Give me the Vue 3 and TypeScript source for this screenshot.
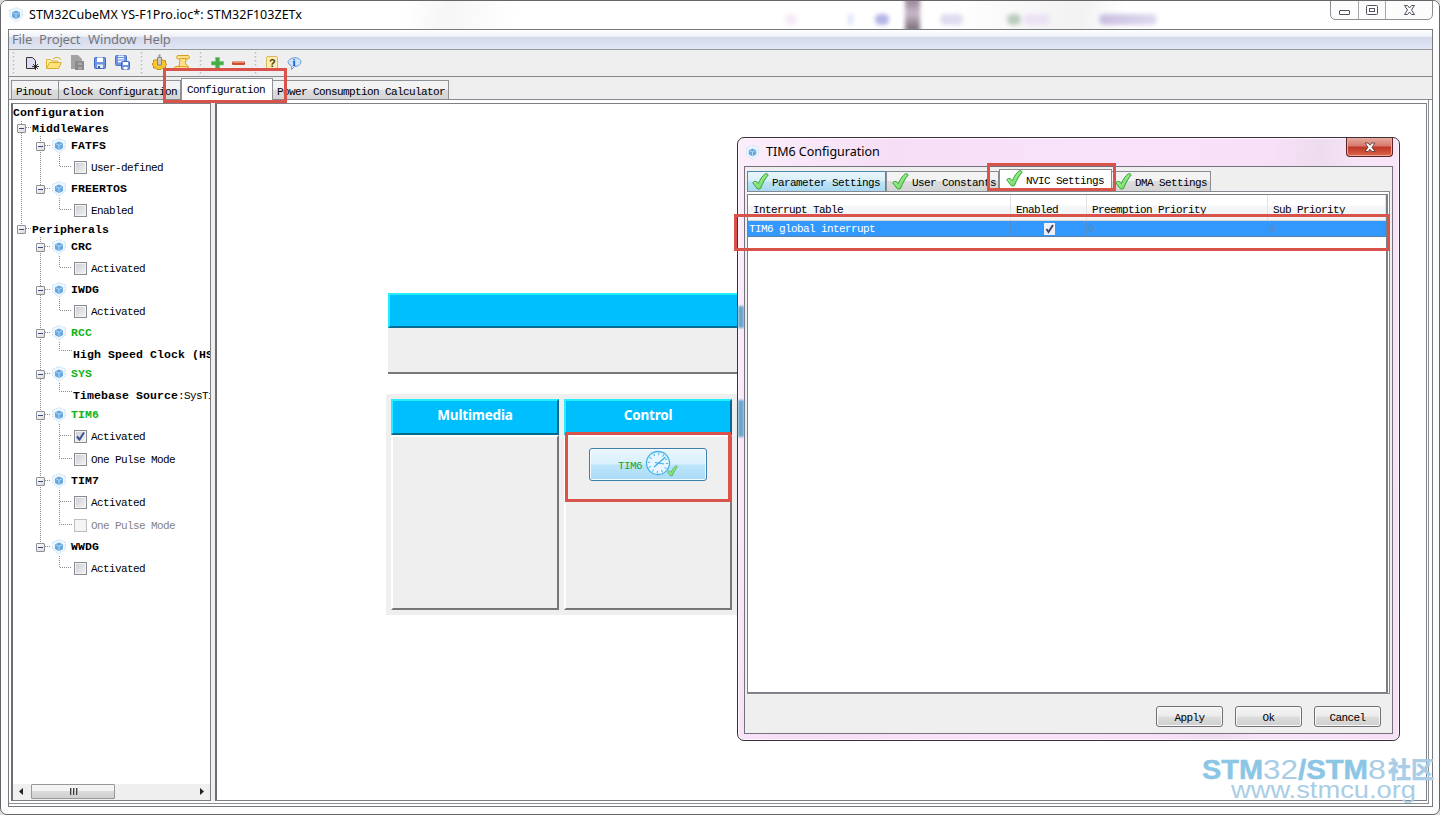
<script setup lang="ts">
import { computed } from 'vue'

type Kind = 'root' | 'group' | 'node' | 'check' | 'param'
interface Row {
  kind: Kind
  label: string
  value?: string
  on?: boolean
  green?: boolean
  disabled?: boolean
}

const rows: Row[] = [
  { kind: 'root', label: 'Configuration' },
  { kind: 'group', label: 'MiddleWares' },
  { kind: 'node', label: 'FATFS' },
  { kind: 'check', label: 'User-defined' },
  { kind: 'node', label: 'FREERTOS' },
  { kind: 'check', label: 'Enabled' },
  { kind: 'group', label: 'Peripherals' },
  { kind: 'node', label: 'CRC' },
  { kind: 'check', label: 'Activated' },
  { kind: 'node', label: 'IWDG' },
  { kind: 'check', label: 'Activated' },
  { kind: 'node', label: 'RCC', green: true },
  { kind: 'param', label: 'High Speed Clock (HSE)' },
  { kind: 'node', label: 'SYS', green: true },
  { kind: 'param', label: 'Timebase Source', value: ':SysTick' },
  { kind: 'node', label: 'TIM6', green: true },
  { kind: 'check', label: 'Activated', on: true },
  { kind: 'check', label: 'One Pulse Mode' },
  { kind: 'node', label: 'TIM7' },
  { kind: 'check', label: 'Activated' },
  { kind: 'check', label: 'One Pulse Mode', disabled: true },
  { kind: 'node', label: 'WWDG' },
  { kind: 'check', label: 'Activated' },
]

const heights: Record<Kind, number> = { root: 17, group: 15, node: 20, check: 23, param: 21 }

// Dotted connectors, walked from the row heights
const connectors = computed(() => {
  let y = 0
  let nodeBottom = 0
  let groupBottom = 0
  let lastNode = 0
  let d = ''
  let lastGroup = 0
  rows.forEach((r) => {
    const mid = Math.floor(y + heights[r.kind] / 2) - 0.5
    if (r.kind === 'group') {
      if (lastNode) d += `M27.5 ${groupBottom}V${lastNode}`
      d += `M9 ${mid}H18`
      groupBottom = y + 15
      lastGroup = mid
    } else if (r.kind === 'node') {
      d += `M28 ${mid}H38`
      lastNode = mid
      nodeBottom = y + 19
    } else if (r.kind !== 'root') {
      const at = r.kind === 'param' ? mid - 2 : mid
      d += `M46.5 ${nodeBottom}V${at}H59`
    }
    y += heights[r.kind]
  })
  d += `M27.5 ${groupBottom}V${lastNode}M8.5 17V${lastGroup}`
  return d
})

const dialogTabs = [
  { label: 'Parameter Settings', cls: 'param' },
  { label: 'User Constants', cls: 'user' },
  { label: 'NVIC Settings', cls: 'nvic' },
  { label: 'DMA Settings', cls: 'dma' },
]
const columns = ['Interrupt Table', 'Enabled', 'Preemption Priority', 'Sub Priority']
const menus = ['File', 'Project', 'Window', 'Help']
const actions = ['Apply', 'Ok', 'Cancel']
</script>

<template>
  <svg width="0" height="0" class="defs">
    <defs>
      <linearGradient id="tick" x1="0" y1="0" x2="1" y2="1">
        <stop offset="0" stop-color="#b9f5a0" /><stop offset="1" stop-color="#5fd85a" />
      </linearGradient>
      <symbol id="cube" viewBox="0 0 16 16">
        <path d="M8 .7 14.3 3v7L8 15.3 1.700 10V3z" fill="#f0f8fe" stroke="#c4e2f6" stroke-width="1" stroke-dasharray="2 .7" />
        <path d="M8 3.600 12 5.300v4.600L8 12.200 4 9.900V5.300z" fill="#69a8de" />
        <path d="M4.500 5.700 8 7.300l3.500-1.600M8 7.300V12" fill="none" stroke="#b8dcf6" stroke-width=".9" />
      </symbol>
      <symbol id="check" viewBox="0 0 16 16">
        <path d="M.7 9.200Q2.500 7.300 3.800 8L6 10C7.500 6 10 2.500 12.500.7Q14.500.3 15.300 1.800C12.500 5 10 9.500 8 14.500Q6.500 15.700 5 14.800z" fill="url(#tick)" stroke="#2f9e37" stroke-width=".9" stroke-linejoin="round" />
      </symbol>
    </defs>
  </svg>
  <div class="window">
    <header class="titlebar">
      <svg class="app-icon"><use href="#cube" /></svg>
      <span class="title">STM32CubeMX YS-F1Pro.ioc*: STM32F103ZETx</span>
      <div class="smudges">
        <i class="s1" /><i class="s2" /><i class="s3" /><i class="s4" /><i class="s5" /><i class="s6" /><i class="s7" /><i class="s8" />
      </div>
      <div class="controls">
        <svg width="104" height="19" viewBox="0 0 104 19">
          <path d="M.5 0V13Q.5 18.500 6 18.500H97Q102.500 18.500 102.500 13V0" fill="#fcfcfc" stroke="#8e8e92" />
          <path d="M28.500 0V18M55.500 0V18" stroke="#a5a5a9" />
          <rect x="9.500" y="9.500" width="10" height="4" rx=".5" fill="#fff" stroke="#505260" />
          <rect x="36.500" y="4.500" width="11" height="9" rx="1" fill="#fff" stroke="#505260" />
          <rect x="39.500" y="7.500" width="5" height="3" fill="#fff" stroke="#505260" />
          <path d="M74.500 4.500h3l2 2.500 2-2.500h3L81.500 9l3 4.500h-3l-2-2.500-2 2.500h-3l3-4.500z" fill="#fff" stroke="#505260" />
        </svg>
      </div>
    </header>

    <main class="client">
      <nav class="menubar">
        <span v-for="m in menus" :key="m" :class="'menu-' + m.toLowerCase()">{{ m }}</span>
      </nav>
      <div class="toolbar">
        <svg width="310" height="26" viewBox="9 50 310 26">
          <g stroke="#b9b9b9" stroke-width="1.500" stroke-dasharray="1.500 2.500">
            <path d="M13.500 52V74M141.500 52V74M200.500 52V74M255.500 52V74" />
          </g>
          <path d="M26.500 57.500h6l3 3v8h-9z" fill="#dedcf5" stroke="#333" />
          <path d="M35.500 63v7M32 66.500h7M33 64l5 5M38 64l-5 5" stroke="#222" stroke-width=".9" />
          <path d="M46.500 68V59.500h4l1 1.500h6v2" fill="#fff1a8" stroke="#dfb436" />
          <path d="M46.500 68.500 49.500 62.500h12l-3 6z" fill="#ffe37a" stroke="#dcae2c" />
          <path d="M53 59Q57 55.500 61 59.500" fill="none" stroke="#d9b032" />
          <path d="M71 55h7l4 4v10H71z" fill="#a3a3a3" />
          <path d="M75 61h9v9h-9z" fill="#8a8a8a" /><path d="M78 62.500h4v2.500h-4zM78 67h4v2.500h-4z" fill="#a8a8a8" />
          <rect x="94.500" y="57.500" width="11" height="11" rx="1" fill="#6f93e2" stroke="#4268be" />
          <path d="M97 57.500h6v4.500h-6z" fill="#fff" /><path d="M97 64.500h6v3.500h-6z" fill="#e6eefc" /><path d="M98 66h2v2h-2z" fill="#3458a6" />
          <rect x="115.500" y="55.500" width="11" height="10" rx="1" fill="#6f93e2" stroke="#4f74c6" />
          <path d="M118 55.500h6v7h-6z" fill="#eef4ff" /><path d="M118 57.500h6M118 60h6" stroke="#6f93d8" />
          <rect x="121.500" y="61.500" width="8" height="8" rx="1" fill="#6f93e2" stroke="#4268be" /><path d="M123 62h5v3h-5zM123.500 67h4v2.500h-4z" fill="#fff" />
          <path d="M152 64l1.500-1.500V60h3l1-1h4l1.500 1.500h2.500V63l1 1-1 2v2h-3l-1.500 1.500h-4L156 68h-2.500v-2z" fill="#f8c62f" stroke="#c78e15" />
          <path d="M157.500 57.500v7.500h4v-7.500z" fill="#c9c9c9" stroke="#858585" /><path d="M159.500 54.500v3" stroke="#999" stroke-width="2" />
          <path d="M177.500 55.500h11l1 2-1 1.500h-2.500l-.5 4.500 3 3.500v2.500H175l-.5-2.500 1-.5h3.500l1-6-.5-1.500h-2l-1-1.500z" fill="#ffe089" stroke="#d79c20" />
          <path d="M180 58.500h6M178 66.500h8l2 1" fill="none" stroke="#cb9226" stroke-width=".8" />
          <path d="M215.500 57.500h4v4h4v3.500h-4v4h-4v-4h-4v-3.500h4z" fill="#45ac46" stroke="#73c673" stroke-width=".7" />
          <rect x="232" y="61.500" width="13" height="3.500" rx="1" fill="#cc4b2b" /><path d="M233 62.500h11" stroke="#e58b6f" />
          <rect x="266.500" y="56.500" width="11" height="12" rx="1.500" fill="#ffedac" stroke="#d9b960" />
          <text x="269" y="66.500" class="glyph">?</text>
          <path d="M291.500 69.500V66Q287.500 64 288 61.500 290 57.500 295 57.500 301 58.500 301 62 300 66.500 294.500 66.500z" fill="#cfe3fa" stroke="#6f9ed8" />
          <text x="292.500" y="66" class="glyph info">i</text>
        </svg>
      </div>

      <div class="tabs">
        <span class="tab t1">Pinout</span>
        <span class="tab t2">Clock Configuration</span>
        <span class="tab t3 active">Configuration</span>
        <span class="tab t4">Power Consumption Calculator</span>
      </div>

      <div class="workspace">
        <aside class="tree">
          <div class="tree-body">
            <svg class="lines" width="198" height="490">
              <path :d="connectors" fill="none" stroke="#8a8a8a" stroke-dasharray="1 1" />
            </svg>
            <div v-for="(r, i) in rows" :key="i" class="row" :class="[r.kind, { green: r.green, disabled: r.disabled }]">
              <i v-if="r.kind === 'group' || r.kind === 'node'" class="expander" />
              <svg v-if="r.kind === 'node'" class="node-icon"><use href="#cube" /></svg>
              <span v-if="r.kind === 'check'" class="box">
                <svg v-if="r.on" width="11" height="11" viewBox="0 0 11 11"><path d="M2 5.500 4.500 8.500 9 1.500" fill="none" stroke="#3c4f91" stroke-width="2" /></svg>
              </span>
              <span class="label">{{ r.label }}</span><span v-if="r.value" class="value">{{ r.value }}</span>
            </div>
          </div>
          <div class="scrollbar">
            <svg width="198" height="16" viewBox="0 0 198 16">
              <path d="M10 4v7L6 7.500zM187 4v7L191 7.500z" fill="#222" />
            </svg>
            <div class="thumb"><i /><i /><i /></div>
          </div>
        </aside>

        <section class="canvas">
          <div class="middle">
            <div class="middle-head" />
          </div>
          <div class="board">
            <div class="column">
              <h3>Multimedia</h3>
              <div class="cell" />
            </div>
            <div class="column">
              <h3>Control</h3>
              <div class="cell">
                <button class="tim">
                  <span>TIM6</span>
                  <svg width="33" height="28" viewBox="0 0 33 28">
                    <circle cx="13" cy="13" r="11.500" fill="#e8f6ff" stroke="#45b3e7" stroke-width="1.300" />
                    <circle cx="13" cy="13" r="9" fill="none" stroke="#45b3e7" stroke-width="2.500" stroke-dasharray="1 3.712" />
                    <path d="M9 17 20.500 7M10 12.500l9 1.500" stroke="#3dabe2" stroke-width="1.200" fill="none" />
                    <svg x="22" y="15" width="11" height="12"><use href="#check" /></svg>
                  </svg>
                </button>
              </div>
            </div>
          </div>
        </section>
      </div>
    </main>

    <div class="dialog">
      <i class="bleed b1" /><i class="bleed b2" />
      <header class="dlg-title">
        <svg class="dlg-icon"><use href="#cube" /></svg>
        <span>TIM6 Configuration</span>
        <div class="close">
          <svg width="12" height="11" viewBox="0 0 12 11"><path d="M1 1h3l2 2.300L8 1h3L8 5.300l3 4.200H8L6 7.300 4 9.500H1l3-4.200z" fill="#fff" stroke="#5c3a3a" stroke-width=".9" /></svg>
        </div>
      </header>
      <div class="dlg-client">
        <div class="dlg-tabs">
          <span v-for="t in dialogTabs" :key="t.cls" class="dtab" :class="t.cls">
            <svg class="tick"><use href="#check" /></svg>{{ t.label }}
          </span>
        </div>
        <div class="pane">
          <div class="table">
            <div class="thead"><span v-for="c in columns" :key="c">{{ c }}</span></div>
            <div class="trow">
              <span>TIM6 global interrupt</span>
              <span class="mid">
                <svg width="11" height="12" viewBox="0 0 11 12"><rect width="11" height="12" fill="#eef0f4" /><path d="M2.500 6 4.500 9 9 2" fill="none" stroke="#3c4474" stroke-width="1.900" /></svg>
              </span>
              <span class="dim">0</span>
              <span class="dim">0</span>
            </div>
          </div>
        </div>
        <footer class="dlg-foot">
          <button v-for="a in actions" :key="a">{{ a }}</button>
        </footer>
      </div>
    </div>

    <div class="mark m1" />
    <div class="mark m2" />
    <div class="mark m3" />
    <div class="mark m4" />

    <svg class="watermark" width="236" height="52" viewBox="1200 752 236 52">
      <g class="wm">
        <text x="1202" y="779" textLength="61" lengthAdjust="spacingAndGlyphs" class="b">STM</text>
        <text x="1263" y="779" textLength="35" lengthAdjust="spacingAndGlyphs">32</text>
        <text x="1298" y="779" textLength="70" lengthAdjust="spacingAndGlyphs" class="b">/STM</text>
        <text x="1368" y="779" textLength="18" lengthAdjust="spacingAndGlyphs">8</text>
        <text x="1388" y="778" textLength="46" lengthAdjust="spacingAndGlyphs" class="cjk">社区</text>
        <text x="1231" y="798" textLength="185" lengthAdjust="spacingAndGlyphs" class="url">www.stmcu.org</text>
      </g>
    </svg>
  </div>
</template>

<style>
body {
  margin: 0;
  overflow: hidden;
  background: #dcdcdc;
}
</style>

<style scoped>
* {
  box-sizing: border-box;
}
.defs {
  position: absolute;
}
.window {
  position: relative;
  width: 1440px;
  height: 815px;
  border: 1px solid #66666a;
  border-radius: 7px;
  background: #fdfcfd;
  overflow: hidden;
  font: 11px/14px 'Liberation Mono', monospace;
  letter-spacing: -0.6px;
  color: #000;
  white-space: pre;
}
.titlebar {
  position: relative;
  height: 28px;
  display: flex;
  align-items: center;
  padding-left: 7px;
  background: linear-gradient(100deg, #fff 0 28%, #f6f6f6 31%, #fff 36% 66%, #f2f2f2 75%, #fff 78%);
}
.app-icon {
  width: 16px;
  height: 16px;
}
.title {
  margin: -2px 0 0 5px;
  font: 12.500px 'Noto Sans', sans-serif;
  letter-spacing: 0.03px;
}
.controls {
  position: absolute;
  top: 0;
  right: 5px;
  height: 19px;
}
.smudges i {
  position: absolute;
  top: 13px;
  height: 11px;
  width: 12px;
  border-radius: 5px;
  filter: blur(2px);
}
.smudges .s1 { left: 784px; background: #f6eaf6; }
.smudges .s2 { left: 847px; width: 5px; background: #dde3fb; }
.smudges .s3 { left: 874px; width: 14px; background: #b4b5e6; }
.smudges .s4 { left: 904px; top: -3px; width: 15px; height: 34px; background: linear-gradient(#8f7e91, #c9b9c9 45%, #6f6571); border-radius: 0; }
.smudges .s5 { left: 939px; width: 23px; background: #dedcef; }
.smudges .s6 { left: 1006px; width: 14px; background: #bccdbf; }
.smudges .s7 { left: 1022px; width: 27px; background: #ebe3f5; }
.smudges .s8 { left: 1098px; width: 58px; background: linear-gradient(90deg, #c9bfe0, #e0daf0); }

.client {
  position: relative;
  margin: 0 7px;
  width: 1425px;
  height: 778px;
  border: 1px solid #777a7e;
  display: flex;
  flex-direction: column;
  background: #fff;
}
.menubar {
  flex: none;
  height: 20px;
  display: flex;
  border-bottom: 1px solid #97999d;
  background: linear-gradient(#fff, #eef1f8 34%, #d5daeb 36%, #e1e6f5);
  color: #76767a;
  font: 13px/18px 'Noto Sans', sans-serif;
  letter-spacing: -0.15px;
}
.menubar span { flex: none; }
.menu-file { width: 30px; padding-left: 3px; }
.menu-project { width: 49px; }
.menu-window { width: 55px; }
.toolbar {
  flex: none;
  height: 27px;
  background: #efefef;
  border-bottom: 1px solid #85878a;
}
.toolbar svg { display: block; }
.glyph {
  font: bold 11px 'Liberation Sans', sans-serif;
  fill: #4c3d13;
}
.info {
  font-family: 'Liberation Serif', serif;
  fill: #1e50a8;
}
.tabs {
  flex: none;
  height: 23px;
  display: flex;
  align-items: flex-end;
  padding-left: 2px;
  background: #efefef;
  border-bottom: 1px solid #85888e;
}
.tab {
  height: 19px;
  padding: 4px 0 0 4px;
  border: 1px solid #8e9196;
  border-bottom: 0;
  background: linear-gradient(#f3f3f3 45%, #dcdcdc 50%, #d4d4d4);
  white-space: pre;
}
.t1 { width: 48px; }
.t2 { width: 122px; border-left: 0; }
.t3 { width: 92px; }
.t4 { width: 176px; border-left: 0; }
.tab.active {
  height: 22px;
  padding: 4px 0 0 5px;
  background: #fff;
  margin-bottom: -1px;
}
.workspace {
  flex: 1;
  min-height: 0;
  display: grid;
  grid-template-columns: 200px 4px 1fr;
  padding: 3px 1px 2px 2px;
  margin-right: 3px;
  margin-bottom: 2px;
  border-right: 1px solid #8b8e94;
  border-bottom: 1px solid #8b8e94;
}
.tree {
  display: flex;
  flex-direction: column;
  min-width: 0;
  border: 1px solid #7e8086;
  border-top-width: 1px;
  border-left: 2px solid #6c6e74;
  box-shadow: 4px 0 0 #eee;
  background: #fff;
  overflow: hidden;
}
.tree-body {
  position: relative;
  flex: 1;
}
.lines {
  position: absolute;
  left: 0;
  top: 0;
}
.row {
  position: relative;
  display: flex;
  align-items: center;
  overflow: hidden;
}
.row .label { flex: none; }
.row.root { height: 17px; }
.row.group { height: 15px; padding-left: 4px; }
.row.node { height: 20px; padding-left: 23px; }
.row.check { height: 23px; padding-left: 61px; }
.row.param { height: 21px; padding: 3px 0 0 60px; }
.root .label, .group .label, .node .label, .param .label {
  font-weight: bold;
  font-size: 11.500px;
  letter-spacing: 0.1px;
  color: #000;
}
.green .label { color: #0fb31a; }
.disabled .label { color: #838383; }
.expander {
  flex: none;
  width: 9px;
  height: 9px;
  border: 1px solid #8c8f94;
  border-radius: 1px;
  background: linear-gradient(#364b85, #364b85) center / 5px 1px no-repeat, linear-gradient(135deg, #fff, #d9d9d9);
}
.group .label { margin-left: 6px; }
.node-icon {
  flex: none;
  width: 16px;
  height: 16px;
  margin: 0 4px 0 6px;
}
.box {
  flex: none;
  display: flex;
  width: 13px;
  height: 13px;
  margin: -1px 4px 0 0;
  border: 1px solid #898c90;
  background: linear-gradient(135deg, #c9ccd1, #f5f5f5);
  box-shadow: inset 0 0 0 1px #f3f3f3;
}
.disabled .box {
  border-color: #bfbfbf;
  background: #f5f5f5;
}
.scrollbar {
  position: relative;
  flex: none;
  height: 16px;
  background: #efefef;
}
.scrollbar svg { display: block; }
.thumb {
  position: absolute;
  left: 18px;
  top: 0;
  display: flex;
  justify-content: center;
  align-items: center;
  gap: 2px;
  width: 84px;
  height: 15px;
  border: 1px solid #94979b;
  border-radius: 1px;
  background: linear-gradient(#f4f4f4 45%, #dadada 50%, #cfcfcf);
}
.thumb i {
  width: 1px;
  height: 7px;
  background: #444;
  box-shadow: 1px 0 0 #aaa;
}
.canvas {
  grid-column: 3;
  display: flex;
  flex-direction: column;
  border: 1px solid #7e8086;
  border-left: 2px solid #6c6e74;
  padding: 189px 0 0 169px;
}
.middle {
  width: 700px;
  height: 81px;
  margin-left: 2px;
  background: #efefef;
  border-bottom: 2px solid #777;
}
.middle-head {
  height: 35px;
  background: #00bfff;
  border: 2px solid #22efff;
  border-bottom-color: #086b91;
}
.board {
  display: flex;
  gap: 5px;
  width: 700px;
  height: 221px;
  margin-top: 20px;
  padding: 5px;
  background: #efefef;
}
.column { width: 168px; }
.column h3 {
  height: 36px;
  margin: 0;
  border: 2px solid;
  border-color: #22efff #07688d #07688d #22efff;
  background: #00bfff;
  color: #fff;
  font: bold 13.500px/28px 'Noto Sans', sans-serif;
  letter-spacing: -0.2px;
  text-align: center;
}
.cell {
  height: 175px;
  padding: 11px 0 0 23px;
  border: 2px solid;
  border-color: #fff #777 #777 #fff;
}
.tim {
  display: flex;
  align-items: center;
  width: 118px;
  height: 33px;
  padding: 0 0 0 28px;
  border: 1px solid #3f7fae;
  border-radius: 3px;
  background: linear-gradient(#eaf6fd, #d9f0fc 49%, #bce5fb 51%, #a9daf5);
  box-shadow: inset 0 0 0 1px #f2fbff;
  color: #14a82b;
  font: inherit;
  letter-spacing: -0.6px;
}
.tim span { padding-top: 2px; }
.tim svg { margin: -1px 0 0 3px; }

.dialog {
  position: absolute;
  left: 736px;
  top: 136px;
  width: 663px;
  height: 604px;
  padding: 0 6px 6px;
  border: 1px solid #3a3039;
  border-radius: 7px;
  background: linear-gradient(100deg, #fbeefb, #f6dff6 20%, #f9e3fa 45%, #f8e0f8 70%, #eddcee 76%, #f7e6f8 82%, #f7dff7);
  box-shadow: inset 0 0 0 1px #fff5ff;
}
.bleed {
  position: absolute;
  left: 0;
  width: 6px;
  filter: blur(1px);
  background: #6aa6cb;
}
.b1 { top: 168px; height: 22px; }
.b2 { top: 262px; height: 37px; }
.dlg-title {
  position: relative;
  height: 28px;
  display: flex;
  align-items: center;
  padding-left: 1px;
  font: 12.500px 'Noto Sans', sans-serif;
  letter-spacing: -0.02px;
}
.dlg-title > span { margin-top: -1px; }
.dlg-icon {
  width: 15px;
  height: 15px;
  margin-right: 6px;
}
.close {
  position: absolute;
  right: 0;
  top: 0;
  width: 47px;
  height: 19px;
  display: flex;
  align-items: center;
  justify-content: center;
  border: 1px solid #5d2222;
  border-top: 0;
  border-radius: 0 0 4px 4px;
  background: linear-gradient(#e6aa9f, #d77669 45%, #bd3526 50%, #dc654b);
  box-shadow: inset 0 0 0 1px #eda79b;
}
.dlg-client {
  width: 649px;
  height: 568px;
  padding: 3px 2px 0 2px;
  border: 1px solid #75717a;
  background: #efefef;
}
.dlg-tabs {
  height: 21px;
  display: flex;
  align-items: flex-end;
}
.dtab {
  position: relative;
  display: flex;
  align-items: center;
  height: 20px;
  padding: 3px 0 0 4px;
  border: 1px solid #898c92;
  border-bottom: 0;
  background: linear-gradient(#f3f3f3 45%, #dcdcdc 50%, #d4d4d4);
}
.tick {
  flex: none;
  width: 17px;
  height: 17px;
  margin: -4px 3px 0 0;
}
.dtab.param {
  width: 139px;
  background: linear-gradient(#e9f6fd, #d8effb 48%, #bde3f7 52%, #a8d8f2);
  border-color: #5087ac;
}
.dtab.user { width: 113px; padding-left: 5px; }
.dtab.nvic {
  height: 22px;
  width: 113px;
  padding: 0 0 0 6px;
  background: #fff;
}
.dtab.dma {
  width: 99px;
  padding-left: 3px;
  border-left: 0;
}
.pane {
  height: 503px;
  padding: 2px 1px 1px 0;
  border: 1px solid #85888e;
  border-left-width: 0;
  background: #fff;
}
.table {
  height: 499px;
  border: 1px solid #7b7e85;
  border-right-width: 2px;
  background: #fff;
}
.thead,
.trow {
  display: grid;
  grid-template-columns: 263px 76px 181px 1fr;
}
.thead {
  height: 26px;
  background: linear-gradient(#fff 40%, #f5f6f8 45%, #f2f3f5);
  border-bottom: 1px solid #d5d5d5;
}
.thead span {
  padding: 8px 0 0 5px;
  border-right: 1px solid #e0e2e5;
}
.trow {
  height: 16px;
  background: #3399ff;
  border-bottom: 1px solid #5583ae;
  color: #fff;
}
.trow span {
  height: 15px;
  padding-top: 2px;
  padding-left: 1px;
  line-height: 13px;
  border-right: 1px solid #4f8ecb;
}
.trow .mid { padding-left: 33px; }
.trow .dim {
  padding-left: 1px;
  color: #5c88b2;
}
.dlg-foot {
  display: flex;
  justify-content: flex-end;
  gap: 12px;
  padding: 12px 9px 0 0;
}
.dlg-foot button {
  width: 67px;
  height: 21px;
  padding: 2px 0 0;
  border: 1px solid #707074;
  border-radius: 3px;
  background: linear-gradient(#f4f4f4, #ececec 48%, #dddddd 52%, #cfcfcf);
  box-shadow: inset 0 0 0 1px #fafafa;
  color: #000;
  font: inherit;
  letter-spacing: -0.6px;
}
.mark {
  position: absolute;
  border: 3px solid #d9534b;
}
.m1 { left: 162px; top: 67px; width: 124px; height: 35px; }
.m2 { left: 564px; top: 431px; width: 166px; height: 70px; }
.m3 { left: 986px; top: 162px; width: 129px; height: 28px; }
.m4 { left: 733px; top: 213px; width: 656px; height: 37px; }
.watermark {
  position: absolute;
  left: 1199px;
  top: 751px;
}
.wm {
  fill: #a9cde6;
  font: 27px 'Liberation Sans', sans-serif;
  letter-spacing: 0;
}
.wm .b {
  font-weight: bold;
  fill: #8cc6e5;
  stroke: #8cc6e5;
  stroke-width: 0.5px;
}
.wm .cjk {
  font: bold 23px 'Noto Sans CJK SC', sans-serif;
  stroke: #a9cde6;
  stroke-width: 0.6px;
}
.wm .url {
  font-size: 23px;
}
</style>
